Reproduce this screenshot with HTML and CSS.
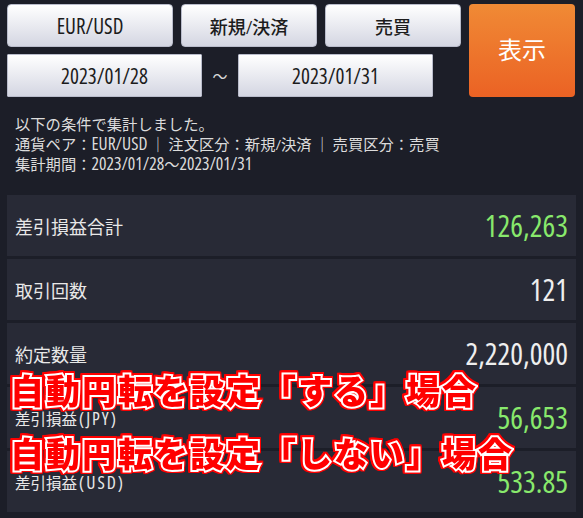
FILE: index.html
```html
<!DOCTYPE html>
<html lang="ja">
<head>
  <meta charset="UTF-8">
  <meta name="viewport" content="width=device-width, initial-scale=1.0">
  <link rel="stylesheet" href="styles.css">
</head>
<body>
  <div class="page">
    <div class="controls">
      <button class="sel pair">EUR/USD</button>
      <button class="sel">新規/決済</button>
      <button class="sel">売買</button>
      <button class="show">表示</button>
      <div class="dates">
        <button class="date">2023/01/28</button>
        <span class="tilde">～</span>
        <button class="date">2023/01/31</button>
      </div>
    </div>

    <div class="summary">
      <p>以下の条件で集計しました。</p>
      <p>通貨ペア：<span class="en">EUR/USD</span> ｜ 注文区分：新規/決済 ｜ 売買区分：売買</p>
      <p>集計期間：<span class="en">2023/01/28</span>～<span class="en">2023/01/31</span></p>
    </div>

    <div class="cards">
      <div class="card">
        <span class="label big">差引損益合計</span>
        <span class="value plus">126,263</span>
      </div>
      <div class="card">
        <span class="label big">取引回数</span>
        <span class="value">121</span>
      </div>
      <div class="card">
        <span class="label big">約定数量</span>
        <span class="value">2,220,000</span>
      </div>
      <div class="card">
        <span class="label">差引損益<span class="en">(JPY)</span></span>
        <span class="value plus">56,653</span>
      </div>
      <div class="card">
        <span class="label">差引損益<span class="en">(USD)</span></span>
        <span class="value plus">533.85</span>
      </div>
    </div>

    <div class="note note-1">自動円転を設定「する」場合</div>
    <div class="note note-2">自動円転を設定「しない」場合</div>
  </div>
</body>
</html>
```

FILE: styles.css
```css
body {
  margin: 0;
  background-color: #1c1e28;
  font-family: "Open Sans", "Noto Sans CJK JP", sans-serif;
  font-stretch: 80%;
  color: #e6e6e6;
}
.page {
  position: relative;
  width: 569px;
  height: 518px;
  padding: 4px 7px 0 7px;
}
.controls {
  display: grid;
  grid-template-columns: 166px 136px 136px 106px;
  grid-template-rows: 43px 43px;
  column-gap: 8px;
  row-gap: 7px;
}
.sel, .date {
  border: 1px solid #b9bccb;
  background: linear-gradient(#ffffff, #d4d6e2);
  color: #1c1c1c;
  font-family: "Open Sans", "Noto Sans CJK JP", sans-serif;
  font-stretch: 80%;
  font-weight: 500;
  font-size: 18px;
  padding: 0;
}
.sel {
  border-radius: 4px;
}
.sel.pair {
  font-size: 21px;
  font-stretch: 72%;
}
.show {
  grid-column: 4;
  grid-row: 1 / 3;
  border: none;
  border-radius: 4px;
  background: linear-gradient(#f08a35, #eb6224);
  color: #fff;
  font-family: "Noto Sans CJK JP", sans-serif;
  font-size: 24px;
  padding: 0 0 4px 0;
}
.dates {
  grid-column: 1 / 4;
  grid-row: 2;
  display: flex;
  align-items: stretch;
}
.date {
  width: 195px;
  border-radius: 1px;
  font-size: 21px;
}
.tilde {
  width: 36px;
  display: flex;
  align-items: center;
  justify-content: center;
  font-size: 15px;
  color: #d8d8d8;
}
.summary {
  padding: 18px 8px 0 8px;
  font-size: 15.3px;
  line-height: 19px;
  color: #dcdcdc;
  height: 80px;
}
.summary p {
  margin: 0;
}
.en {
  font-size: 1.15em;
}
.cards {
  display: flex;
  flex-direction: column;
  gap: 3px;
}
.card {
  height: 61px;
  background-color: #282a36;
  display: flex;
  align-items: center;
  justify-content: space-between;
  padding: 0 8px;
}
.label {
  font-size: 15.5px;
  color: #e8e8e8;
}
.label .en {
  letter-spacing: 2px;
  margin-left: 2px;
}
.label.big {
  font-size: 18px;
}
.value {
  font-size: 30px;
  font-weight: 500;
  color: #eeeeee;
}
.value.plus {
  color: #88e96c;
}
.note {
  position: absolute;
  left: 10px;
  font-family: "Noto Sans CJK JP", sans-serif;
  font-weight: 900;
  font-size: 34px;
  letter-spacing: 2px;
  line-height: 40px;
  color: #ff0000;
  -webkit-text-stroke: 4px #ffffff;
  paint-order: stroke fill;
  filter: drop-shadow(1.5px 0 0 #ff0000) drop-shadow(-1.5px 0 0 #ff0000)
    drop-shadow(0 1.5px 0 #ff0000) drop-shadow(0 -1.5px 0 #ff0000);
}
.note-1 {
  top: 370px;
}
.note-2 {
  top: 433px;
}
```
